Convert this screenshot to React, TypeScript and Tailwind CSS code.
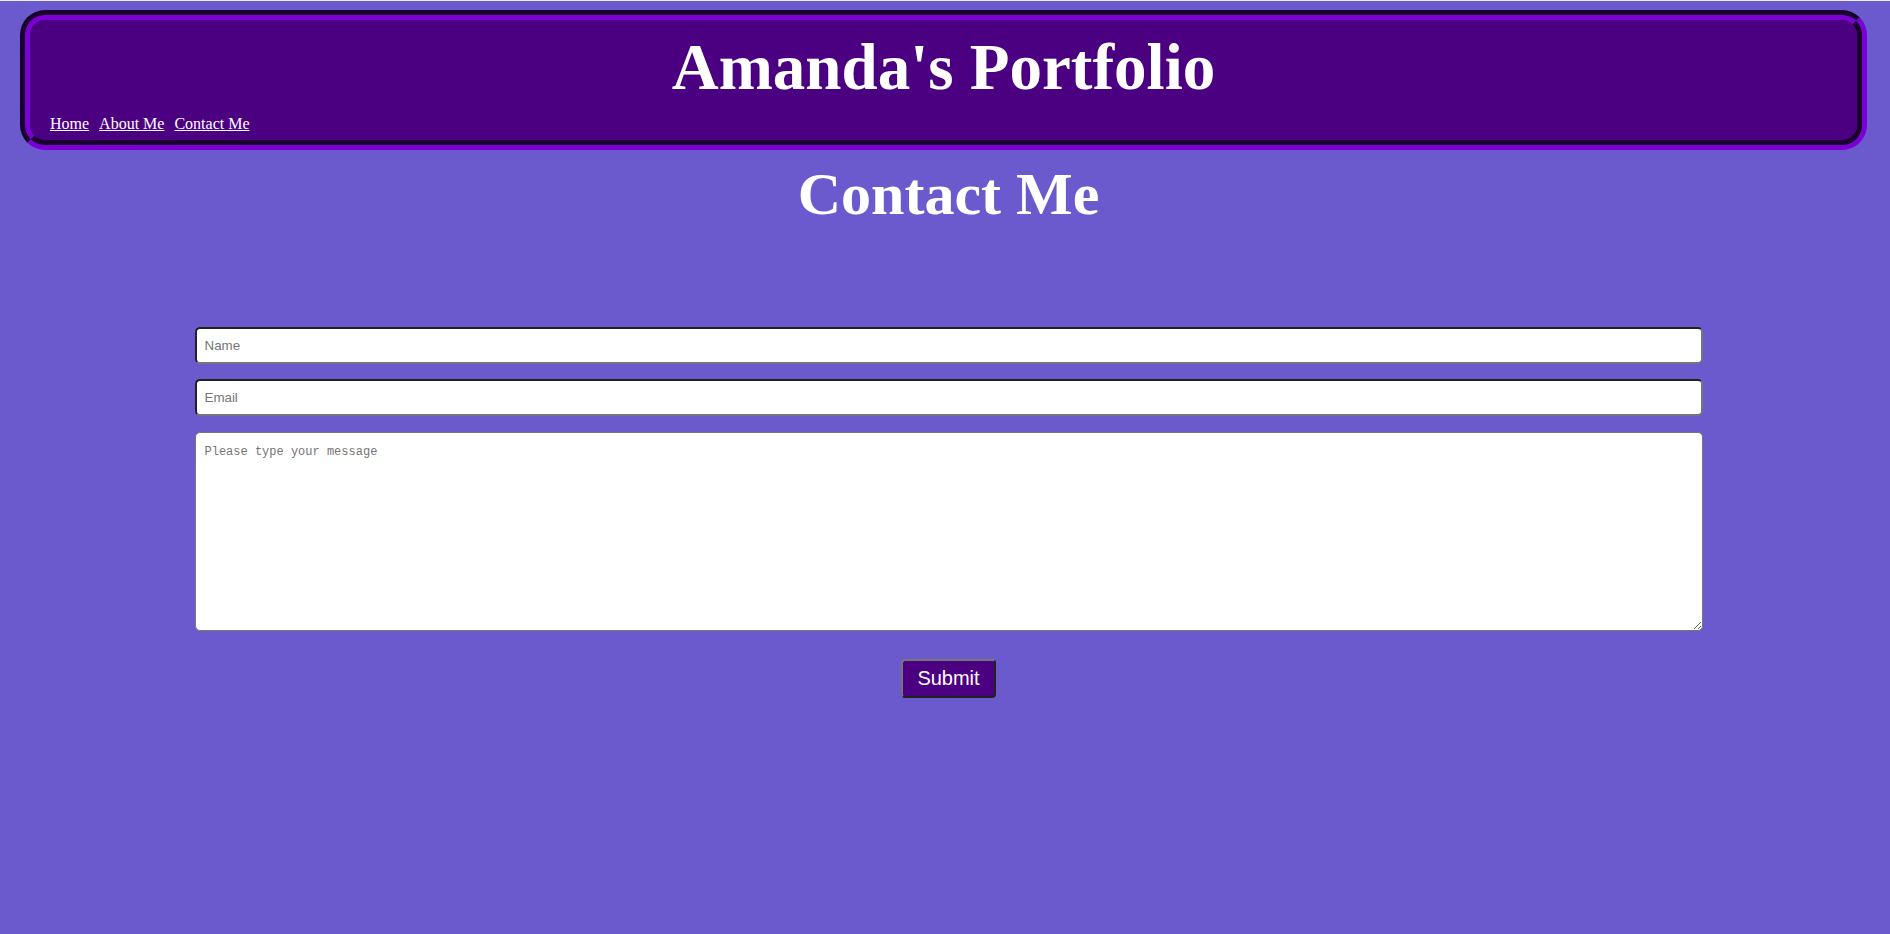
export default function App() {
  return (
    <div className="min-h-screen bg-[#6a5acd] font-['Liberation_Serif',serif]">
      <div className="h-px bg-[#eeeeee]" />

      <header className="mt-[9px] ml-[20px] mr-[23px] rounded-[25px] border-[10px] [border-style:groove] border-[#4b0082] bg-[#4b0082] pt-[15px] pb-[4px]">
        <h1 className="text-center text-[65px] leading-none font-bold text-white">
          Amanda's Portfolio
        </h1>

        <nav className="mt-[12px] flex gap-[10px] pl-[20px] text-[16px] leading-[24px] text-white">
          <a href="#" className="underline">Home</a>
          <a href="#" className="underline">About Me</a>
          <a href="#" className="underline">Contact Me</a>
        </nav>
      </header>

      <main className="pl-[7px]">
        <h2 className="mt-[14px] text-center text-[60px] leading-none font-bold text-white">
          Contact Me
        </h2>

        <form className="mx-auto mt-[103px] flex w-[1508px] flex-col">
          <input
            type="text"
            placeholder="Name"
            className="h-[37px] rounded-[5px] border-2 [border-style:inset] border-[#767676] bg-white px-[8px] font-['Liberation_Sans',Arial,sans-serif] text-[13.33px] text-black placeholder:text-[#757575] outline-none"
          />

          <input
            type="email"
            placeholder="Email"
            className="mt-[15px] h-[37px] rounded-[5px] border-2 [border-style:inset] border-[#767676] bg-white px-[8px] font-['Liberation_Sans',Arial,sans-serif] text-[13.33px] text-black placeholder:text-[#757575] outline-none"
          />

          <textarea
            placeholder="Please type your message"
            className="mt-[16px] h-[199px] rounded-[5px] border border-[#767676] bg-white pt-[12px] pl-[9px] font-['Liberation_Mono',monospace] text-[12px] leading-[14px] text-black placeholder:text-[#757575] outline-none"
          />

          <button
            type="button"
            className="mt-[28px] self-center rounded-[4px] border-2 [border-style:outset] border-[#767676] bg-[#4b0082] px-[14px] py-[6px] font-['Liberation_Sans',Arial,sans-serif] text-[20px] leading-[23px] text-white"
          >
            Submit
          </button>
        </form>
      </main>
    </div>
  );
}
